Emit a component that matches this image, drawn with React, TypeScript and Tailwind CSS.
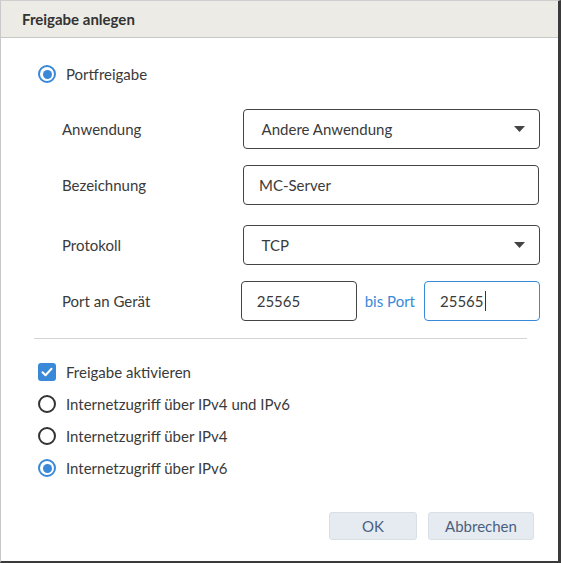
function Radio({ checked }: { checked?: boolean }) {
  return (
    <span
      className={`flex h-[18px] w-[18px] shrink-0 items-center justify-center rounded-full border-2 ${
        checked ? 'border-[#3a89d8]' : 'border-[#333]'
      }`}
    >
      {checked && <span className="h-[9px] w-[9px] rounded-full bg-[#3a89d8]" />}
    </span>
  )
}

function Checkbox() {
  return (
    <span className="flex h-[18px] w-[18px] shrink-0 items-center justify-center rounded-[3px] bg-[#3a89d8]">
      <svg width="12" height="10" viewBox="0 0 12 10" fill="none">
        <path d="M1.5 5.2 4.5 8.2 10.5 1.8" stroke="white" strokeWidth="2" strokeLinecap="round" strokeLinejoin="round" />
      </svg>
    </span>
  )
}

function Caret() {
  return (
    <svg width="11" height="6" viewBox="0 0 11 6" className="ml-auto mr-[4px]">
      <path d="M0 0h11L5.5 6z" fill="#444" />
    </svg>
  )
}

export default function App() {
  return (
    <div
      className="flex h-[563px] w-[561px] flex-col border-t border-l border-t-[#cfcfcf] border-l-[#c9c9c9] border-r-[3px] border-b-[2px] border-r-[#3a3a3a] border-b-[#3a3a3a] bg-white text-[15px] leading-[18px] text-[#3a3a3a]"
      style={{ fontFamily: 'Lato, "Open Sans", sans-serif' }}
    >
      <div className="flex h-[37px] shrink-0 items-center border-b border-[#c8c8c6] bg-[#ecebe6] pl-[21px] font-bold text-[15px] text-[#333]">
        Freigabe anlegen
      </div>

      <div className="flex flex-1 flex-col pl-[37px] pr-[18px]">
        <div className="mt-[27px] flex h-[18px] items-center gap-[10px]">
          <Radio checked />
          <span>Portfreigabe</span>
        </div>

        <div className="ml-[24px] mt-[26px] flex flex-col">
          <div className="flex h-[40px] items-center">
            <div className="w-[181px]">Anwendung</div>
            <div className="flex h-[40px] w-[298px] items-center rounded-[4px] border border-[#444] pl-[18px] pr-[10px]">
              Andere Anwendung
              <Caret />
            </div>
          </div>
          <div className="mt-[16px] flex h-[40px] items-center">
            <div className="w-[181px]">Bezeichnung</div>
            <div className="flex h-[40px] w-[296px] items-center rounded-[4px] border border-[#444] pl-[15px]">
              MC-Server
            </div>
          </div>
          <div className="mt-[20px] flex h-[40px] items-center">
            <div className="w-[181px]">Protokoll</div>
            <div className="flex h-[40px] w-[298px] items-center rounded-[4px] border border-[#444] pl-[18px] pr-[10px]">
              TCP
              <Caret />
            </div>
          </div>
          <div className="mt-[16px] flex h-[40px] items-center">
            <div className="w-[181px]">Port an Gerät</div>
            <div className="flex h-[40px] w-[116px] shrink-0 items-center rounded-[4px] border border-[#444] pl-[15px]">
              25565
            </div>
            <span className="ml-[8px] whitespace-nowrap text-[#3a89d8]">bis Port</span>
            <div className="ml-[9px] flex h-[40px] w-[116px] shrink-0 items-center rounded-[4px] border border-[#3a89d8] pl-[15px]">
              25565<span className="ml-[1px] h-[20px] w-px bg-[#333]" />
            </div>
          </div>
        </div>

        <div className="-ml-[4px] mt-[17px] h-px w-[493px] bg-[#d4d4d4]" />

        <div className="mt-[24px] flex flex-col gap-[14px]">
          <div className="flex h-[18px] items-center gap-[10px]">
            <Checkbox />
            <span>Freigabe aktivieren</span>
          </div>
          <div className="flex h-[18px] items-center gap-[10px]">
            <Radio />
            <span>Internetzugriff über IPv4 und IPv6</span>
          </div>
          <div className="flex h-[18px] items-center gap-[10px]">
            <Radio />
            <span>Internetzugriff über IPv4</span>
          </div>
          <div className="flex h-[18px] items-center gap-[10px]">
            <Radio checked />
            <span>Internetzugriff über IPv6</span>
          </div>
        </div>

        <div className="mt-auto mb-[21px] flex justify-end gap-[11px] pr-[6px]">
          <button className="h-[28px] w-[88px] rounded-[3px] border border-[#d9dfe7] bg-[#e6ebf1] text-[15px] text-[#4a5f80]">
            OK
          </button>
          <button className="h-[28px] w-[106px] rounded-[3px] border border-[#d9dfe7] bg-[#e6ebf1] text-[15px] text-[#4a5f80]">
            Abbrechen
          </button>
        </div>
      </div>
    </div>
  )
}
